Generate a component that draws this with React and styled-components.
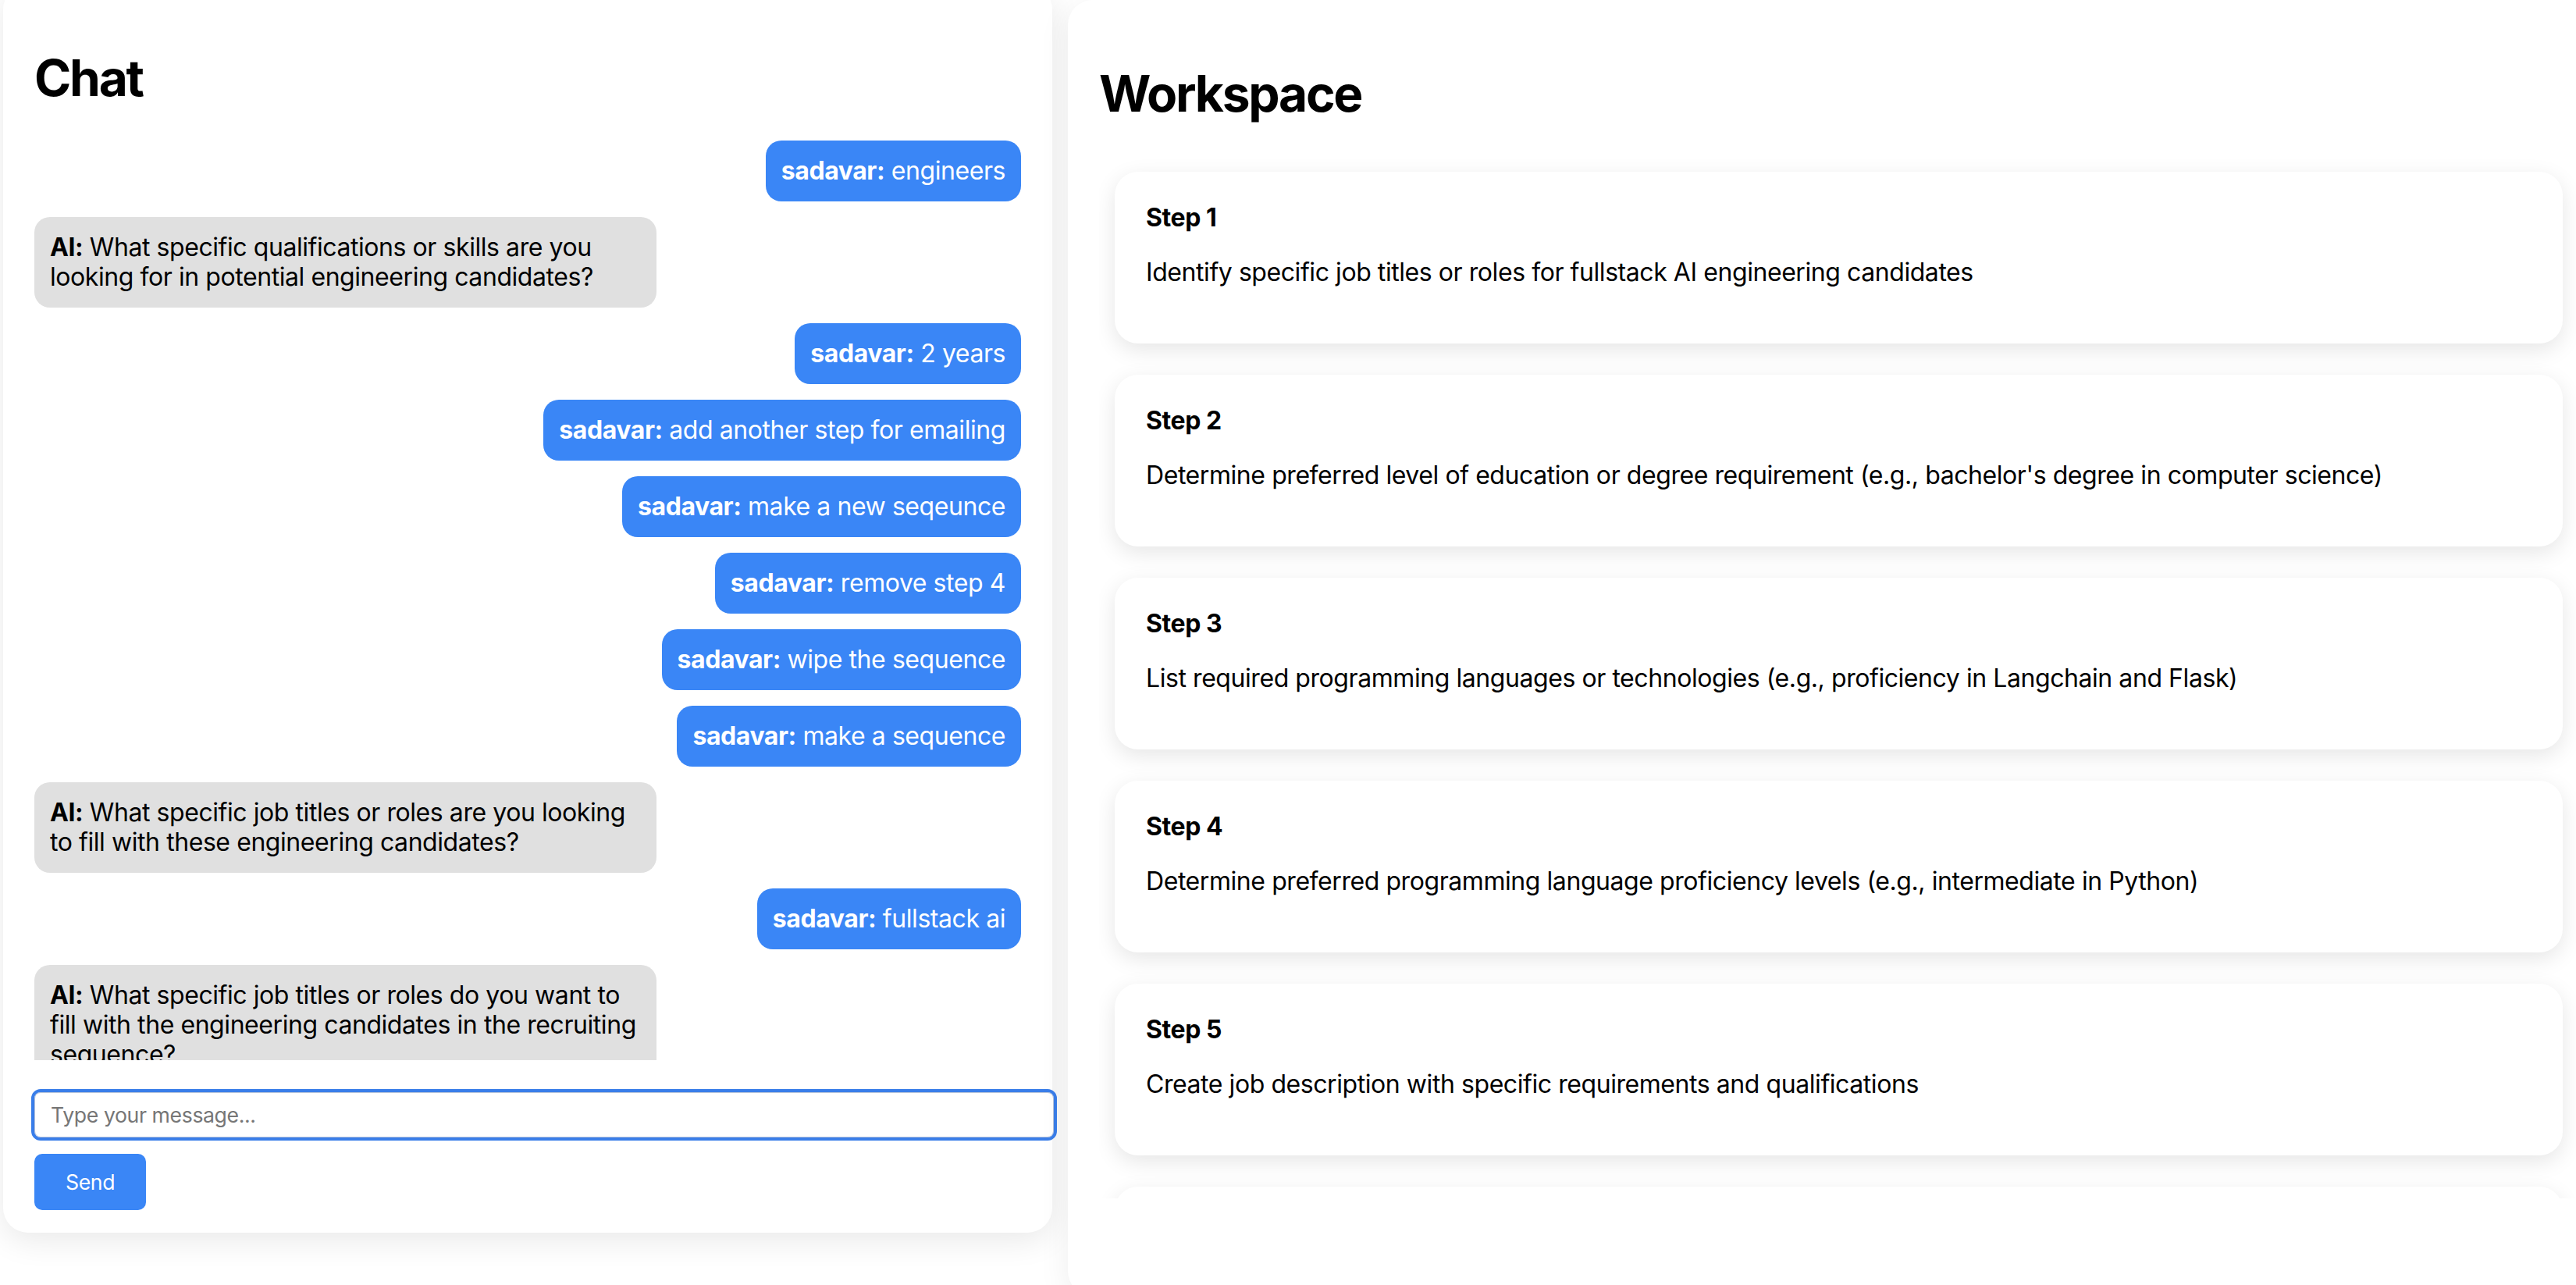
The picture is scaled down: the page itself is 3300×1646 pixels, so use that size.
import React from "react";
import styled, { createGlobalStyle } from "styled-components";

const GlobalStyle = createGlobalStyle`
  html, body {
    margin: 0;
    padding: 0;
    background: #ffffff;
    overflow: hidden;
  }
  body {
    font-family: Inter, "Noto Sans", "Liberation Sans", sans-serif;
    letter-spacing: -0.027em;
    color: #000;
  }
  * {
    box-sizing: content-box;
  }
`;

const messages = [
  { from: "user", text: "engineers" },
  { from: "ai", text: "What specific qualifications or skills are you looking for in potential engineering candidates?" },
  { from: "user", text: "2 years" },
  { from: "user", text: "add another step for emailing" },
  { from: "user", text: "make a new seqeunce" },
  { from: "user", text: "remove step 4" },
  { from: "user", text: "wipe the sequence" },
  { from: "user", text: "make a sequence" },
  { from: "ai", text: "What specific job titles or roles are you looking to fill with these engineering candidates?" },
  { from: "user", text: "fullstack ai" },
  { from: "ai", text: "What specific job titles or roles do you want to fill with the engineering candidates in the recruiting sequence?" },
];

const steps = [
  "Identify specific job titles or roles for fullstack AI engineering candidates",
  "Determine preferred level of education or degree requirement (e.g., bachelor's degree in computer science)",
  "List required programming languages or technologies (e.g., proficiency in Langchain and Flask)",
  "Determine preferred programming language proficiency levels (e.g., intermediate in Python)",
  "Create job description with specific requirements and qualifications",
  "Draft outreach email for shortlisted candidates",
];

const App = () => {
  return (
    <>
      <GlobalStyle />
      <Page>
        <ChatPanel>
          <Title>Chat</Title>
          <MessageList>
            {messages.map((m, i) => (
              <Bubble key={i} $user={m.from === "user"}>
                <strong>{m.from === "user" ? "sadavar:" : "AI:"}</strong> {m.text}
              </Bubble>
            ))}
          </MessageList>
          <MessageInput type="text" placeholder="Type your message..." />
          <SendButton>Send</SendButton>
        </ChatPanel>

        <WorkspacePanel>
          <Title>Workspace</Title>
          <StepList>
            {steps.map((s, i) => (
              <StepCard key={i}>
                <StepTitle>Step {i + 1}</StepTitle>
                <StepText>{s}</StepText>
              </StepCard>
            ))}
          </StepList>
        </WorkspacePanel>
      </Page>
    </>
  );
};

export default App;

const Page = styled.div`
  display: flex;
  align-items: flex-start;
  gap: 20px;
  padding-left: 4px;
  height: 1646px;
  overflow: hidden;
`;

const ChatPanel = styled.div`
  flex-shrink: 0;
  width: 1264px;
  margin-top: -20px;
  padding: 40px 40px 29px;
  background: #fff;
  border-radius: 32px;
  box-shadow: 0 10px 40px rgba(0, 0, 0, 0.09);
`;

const Title = styled.h1`
  font-size: 64px;
  font-weight: 700;
  letter-spacing: -0.035em;
  margin: 43px 0;
  line-height: 74px;
`;

const MessageList = styled.div`
  display: flex;
  flex-direction: column;
  gap: 20px;
  height: 1178px;
  overflow: hidden;
`;

const Bubble = styled.div`
  align-self: ${(p) => (p.$user ? "flex-end" : "flex-start")};
  max-width: 757px;
  padding: 20px;
  border-radius: 20px;
  font-size: 32px;
  line-height: 38px;
  background: ${(p) => (p.$user ? "#3a86f6" : "#e0e0e0")};
  color: ${(p) => (p.$user ? "#fff" : "#000")};

  strong {
    font-weight: 700;
  }
`;

const MessageInput = styled.input`
  display: block;
  width: 100%;
  margin-top: 41px;
  padding: 12px 20px;
  font-size: 26.67px;
  line-height: 32px;
  letter-spacing: -0.015em;
  font-family: Inter, "Noto Sans", sans-serif;
  border: 1px solid #b8c4da;
  border-radius: 8px;
  outline: 4px solid #3a7ee9;
  background: #fff;

  &::placeholder {
    color: #767676;
  }
`;

const SendButton = styled.button`
  display: block;
  margin-top: 21px;
  padding: 20px 40px;
  font-size: 26.67px;
  line-height: 32px;
  letter-spacing: -0.015em;
  font-family: Inter, "Noto Sans", sans-serif;
  color: #fff;
  background: #3a86f6;
  border: none;
  border-radius: 10px;
`;

const WorkspacePanel = styled.div`
  flex-shrink: 0;
  width: 1895px;
  height: 1580px;
  padding: 40px;
  background: #fff;
  border-radius: 32px;
  box-shadow: 0 10px 40px rgba(0, 0, 0, 0.07);
`;

const StepList = styled.div`
  display: flex;
  flex-direction: column;
  height: 1335px;
  overflow: hidden;
`;

const StepCard = styled.div`
  flex-shrink: 0;
  margin: 20px;
  padding: 40px;
  background: #fff;
  border-radius: 30px;
  box-shadow: 0 8px 28px rgba(0, 0, 0, 0.1);
`;

const StepTitle = styled.div`
  font-size: 32px;
  font-weight: 700;
  line-height: 38px;
`;

const StepText = styled.p`
  margin: 32px 0;
  font-size: 32px;
  line-height: 38px;
`;
